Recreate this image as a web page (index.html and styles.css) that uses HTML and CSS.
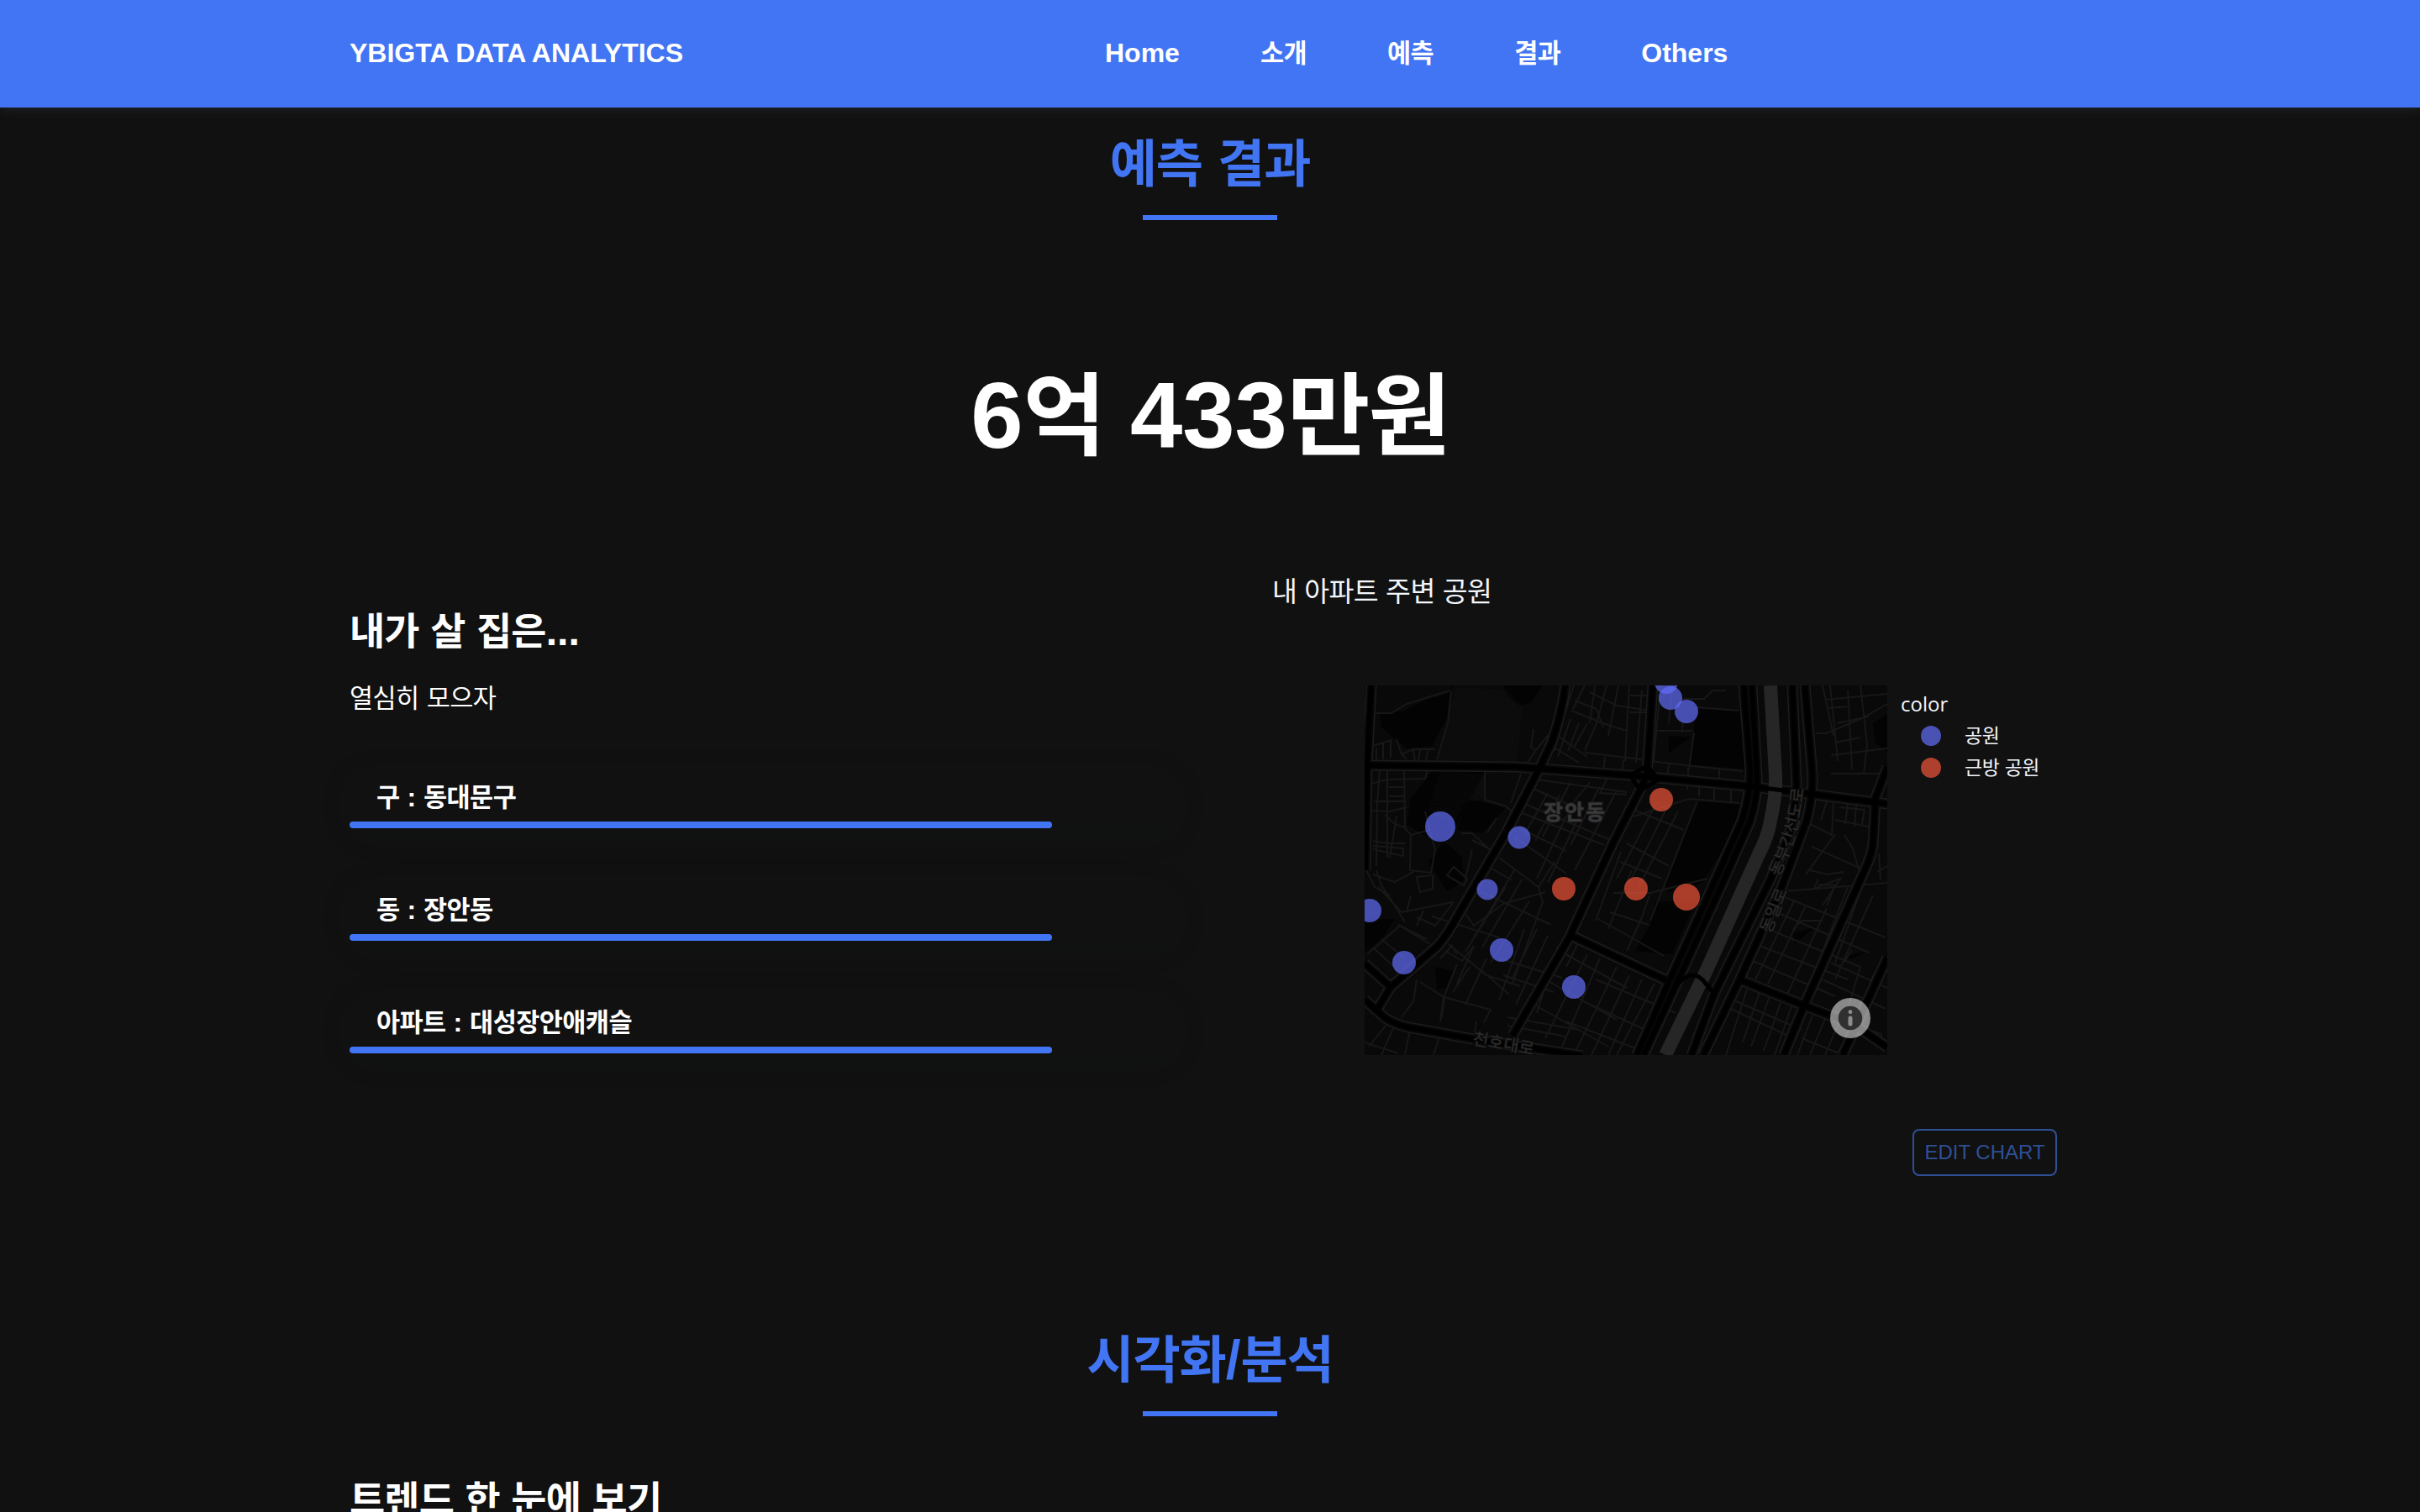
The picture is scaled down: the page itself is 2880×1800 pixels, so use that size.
FILE: index.html
```html
<!DOCTYPE html>
<html lang="ko">
<head>
<meta charset="utf-8">
<title>YBIGTA DATA ANALYTICS</title>
<link rel="stylesheet" href="styles.css">
</head>
<body>
<header class="nav">
  <div class="container nav-inner">
    <a class="brand">YBIGTA DATA ANALYTICS</a>
    <nav class="links"><a>Home</a><a class="ko">소개</a><a class="ko">예측</a><a class="ko">결과</a><a>Others</a></nav>
  </div>
</header>
<main>
<section class="section">
  <h2 class="section-title"><span class="ko">예측 결과</span></h2>
  <p class="price">6<span class="ko">억</span> 433<span class="ko">만원</span></p>
  <div class="container columns">
    <div class="home">
      <h3 class="sub-title"><span class="ko">내가 살 집은</span>...</h3>
      <p class="lead"><span class="ko">열심히 모으자</span></p>
      <ul class="cards">
        <li class="card"><h4><span class="ko">구</span> : <span class="ko">동대문구</span></h4><div class="bar"></div></li>
        <li class="card"><h4><span class="ko">동</span> : <span class="ko">장안동</span></h4><div class="bar"></div></li>
        <li class="card"><h4><span class="ko">아파트</span> : <span class="ko">대성장안애캐슬</span></h4><div class="bar"></div></li>
      </ul>
    </div>
    <div class="chart">
      <h5 class="chart-title"><span class="ko">내 아파트 주변 공원</span></h5>
      <div class="plot">
        <svg class="map" viewBox="0 0 622 440" width="622" height="440">
          <defs>
            <pattern id="dots" width="4" height="4" patternUnits="userSpaceOnUse"><circle cx="1" cy="1" r=".7" fill="#141414"/><circle cx="3" cy="3" r=".7" fill="#141414"/></pattern>
            <g id="roads" fill="none" stroke-linejoin="round">
              <path d="M8 0L3 94L1 220"/>
              <path d="M0 95L180 97L316 107L456 120L529 129L622 141"/>
              <path d="M239 0Q234 35 223 67L209 97L169 174L112 272Q98 298 86 311L31 359L16 384"/>
              <path d="M0 374L20 392Q30 402 52 407L129 421L259 441"/>
              <path d="M0 331L31 359"/>
              <path d="M343 0L336 107L328 124L296 187L243 301L176 417"/>
              <path d="M244 297L316 331L359 351"/>
              <path d="M451 0L459 101Q459 132 449 161L406 257L363 351L324 440"/>
              <path d="M461 0L467 107Q468 130 459 161L419 251L373 351L332 440"/>
              <path d="M509 0L514 117Q512 165 500 190L483 231L416 367L389 440"/>
              <path d="M524 0L533 107Q533 135 526 161L496 241L446 351L403 440"/>
              <path d="M622 97L608 134L605 190Q603 203 596 218L523 381L499 440"/>
              <path d="M448 351L523 381L583 404L622 431"/>
              <path d="M622 324L569 440"/>
            </g>
          </defs>
          <rect width="622" height="440" fill="#090909"/>
          <g fill="#030303">
            <path d="M32 0L105 0L99 10L70 18L46 31L18 32L20 50L50 75L80 72L98 38L102 0ZM165 0H212L198 20L184 24L170 12Z"/>
            <path d="M122 135L168 145L140 176L110 172ZM82 100L143 102L110 165L76 210L98 245L118 232L116 205L100 190L70 178L50 165L55 135Z"/>
            <path d="M0 278L36 278L22 300L0 318ZM395 28L450 30L458 100L388 94ZM396 138L446 142L440 172L402 235L362 246L358 238ZM605 45L622 34V80L608 68ZM346 258L395 255L366 320L322 316L340 285Z"/>
            <path d="M84 335L105 340L96 360L86 362ZM510 295L535 288L512 308ZM573 322L600 316L578 326ZM362 60L388 62L362 80Z"/>
          </g>
          <path d="M108 2L170 6L188 25L181 90L85 90L97 55Z" fill="url(#dots)"/>
          <path d="M90 103L143 106L142 136L120 138L106 163L75 150Z" fill="url(#dots)"/>
          <g class="streets">
            <path d="M13 33H32L50 22L102 6M103 8L99 45L86 88M32 65L10 72M14 74V92M22 68V88M31 66V86M38 64L44 82L58 76H84M44 82L50 88M58 76L60 90M66 77L64 90M75 78L73 90M201 52L198 74L204 77L222 55M204 77L194 92"/>
            <path d="M18 100L15 140L14 215M27 100V205M47 102L48 170M8 117L27 112L72 111L75 100M29 121H46M29 132H46M12 138H50M8 149L30 150L50 145M24 154L36 165L50 170M10 185L27 188H48M10 195L46 203V194L10 191M30 205L38 155M48 170L55 178L78 172M55 178L54 220L79 223L82 206L84 195L78 175M62 228L81 226V242L66 246ZM98 226L106 216L122 230L118 238ZM78 173L72 150"/>
            <path d="M10 225L30 232L36 234L58 222M14 220L20 238L36 262L48 282M2 220L12 240L30 250M16 240L44 270L105 258M55 250L50 270M70 268L62 286M62 276L84 286L106 258M40 285L78 308M3 320L42 286L74 302M20 302L48 325M10 312L35 335M90 325L104 310L110 320M96 316L116 328L130 310"/>
            <path d="M143 102V136L168 144L182 155M186 105L174 140M115 176H128L156 202M128 195L120 230M157 158L146 175M170 170L158 192M128 184L155 198M160 205L207 240L226 210M148 216L175 232M138 245L222 285M168 240L120 317M178 220L130 300M188 230L140 312M196 257L150 330M207 240L212 258L176 355M120 272L130 286L165 260L215 246"/>
            <path d="M188 140L300 187M190 118L250 145M205 112L312 127M184 170L240 197M188 152L285 190M178 180L240 224M240 155L205 230M253 160L218 235M218 128L190 178M232 130L203 185M245 115L212 180M268 115L240 150M280 120L245 190M300 125L250 220M290 108L280 128L312 130"/>
            <path d="M249 0L237 38M262 0L248 28M250 18L276 28M246 30L284 45L312 54M268 8L300 24L340 30M274 0L268 45M288 0L276 45L262 78M302 0L290 60M315 0L310 90M330 5L323 92M235 35L226 78M245 40L230 85M255 45L242 78M230 60L265 85M226 74L255 92M265 45L250 72M276 28L284 50M262 80L330 88M286 85L284 105M308 88L306 106M340 54H390M352 0L344 90M366 0L362 45M379 40L378 56M392 56L386 100M340 90L390 96L450 102M362 94L360 108M385 98V111M422 100V112M376 16H404L414 6H430M395 26L446 30M316 12H340M316 32H335"/>
            <path d="M310 144L380 172M320 156L386 135L446 140M312 188L362 215M304 210L354 230M348 138L300 230M360 145L315 235M373 150L326 240M396 138L340 280M385 110L384 124M398 120V132M416 118V138M436 122V138M296 247L340 247L408 230M292 270L338 285M340 247L330 276L312 316M278 278L356 322M290 195L265 265L245 292M305 198L275 280M318 220L290 290"/>
            <path d="M205 290L175 350M218 298L180 380M190 290L160 375M230 310L205 390M165 345L225 365M160 325L235 348M140 340L172 368M125 335L105 365M100 308L145 345L185 358M110 332L95 370L92 395M94 371L150 386L142 402M66 353L94 371M62 350L58 376L44 395M90 400L94 371M130 310L110 355M145 325L120 380M160 300L80 275M230 315L312 360M215 350L300 398M202 380L290 430M265 320L215 420M280 325L235 430M300 335L250 438M315 345L270 440M330 350L290 440M345 355L300 440M255 305L240 335M275 350L370 390M258 375L345 415M240 400L330 435"/>
            <path d="M5 430L25 405M20 440L34 408M0 425L40 438M54 410L48 440M90 415L82 440M133 400L130 420M170 405L240 418M170 395L255 410"/>
            <path d="M545 0L558 60M554 0L563 90M537 57H550L590 40L622 22M548 17L622 10M550 27L578 25M562 45L600 37M560 68L590 62M555 83L622 75M555 105H622M590 0L598 70L594 105M575 5L580 100M540 135L550 138L543 160M558 140L556 178L530 165M565 145L595 148L592 165M560 160L600 168M575 140L572 165M585 142L583 168M571 178L580 192L590 225M532 192L600 222M530 220L550 225L570 222M610 222L622 215M612 200L614 232M560 177L525 225"/>
            <path d="M500 245L622 235M495 250L620 300M486 268L600 318M480 290L590 335M470 310L575 350M462 328L560 370M512 255L465 350M525 262L480 355M540 230L535 242L566 230L545 262M550 265L502 370M575 240L530 355M590 245L560 330M605 250L560 350M540 237L560 238L550 262M510 290L520 280L545 280M580 315L570 330"/>
            <path d="M440 375L520 410M436 385L510 420M455 362L430 440M470 365L450 425M482 370L460 430M495 378L475 435M508 382L488 440M536 385L515 440M550 392L530 440M565 400L548 440M545 350L620 385M555 330L622 360M590 335L575 385M605 345L590 390M520 420L565 438M600 410L615 415V424"/>
          </g>
          <use href="#roads" class="road-edge"/>
          <use href="#roads" class="road-gap"/>
          <use href="#roads" class="road-core"/>
          <path class="river" d="M483 0L489 107Q490 130 483 161Q480 180 469 201L406 341L358 440"/>
          <path class="bridge" d="M420 115L467 121L529 129M373 355Q392 335 406 355L416 367M336 96L316 107L328 125L350 112Z"/>
          <g class="place-names">
            <text class="district" x="213" y="160">장안동</text>
            <path id="way-s" d="M128 427L206 441" fill="none"/>
            <path id="way-e" d="M493 228Q523 166 523 106" fill="none"/>
            <path id="way-w" d="M483 296L505 240" fill="none"/>
            <text class="way"><textPath href="#way-s">천호대로</textPath></text>
            <text class="way"><textPath href="#way-e">동부간선도로</textPath></text>
            <text class="way"><textPath href="#way-w">동일로</textPath></text>
          </g>
          <g class="park">
            <circle cx="359" cy="-4" r="14"/><circle cx="364" cy="15" r="14"/><circle cx="383" cy="31" r="14"/>
            <circle cx="90" cy="168" r="18"/><circle cx="184" cy="181" r="13.5"/><circle cx="146" cy="243" r="12.5"/>
            <circle cx="6" cy="268" r="14"/><circle cx="47" cy="330" r="14"/><circle cx="163" cy="315" r="14"/><circle cx="249" cy="359" r="14"/>
          </g>
          <g class="near">
            <circle cx="353" cy="136" r="14"/><circle cx="237" cy="242" r="14"/><circle cx="323" cy="242" r="14"/><circle cx="383" cy="252" r="16"/>
          </g>
          <circle cx="578" cy="396" r="24" fill="#fff" opacity=".52"/>
          <circle cx="578" cy="396" r="14.3" fill="#303030"/>
          <circle cx="578" cy="388.7" r="2.4" fill="#8d8d8d"/>
          <rect x="575.5" y="393.5" width="5" height="12" rx="2.5" fill="#8d8d8d"/>
        </svg>
        <div class="legend">
          <div class="legend-title">color</div>
          <div class="legend-item"><i class="dot dot-park"></i><span class="ko">공원</span></div>
          <div class="legend-item"><i class="dot dot-near"></i><span class="ko">근방 공원</span></div>
        </div>
      </div>
      <a class="edit">EDIT CHART</a>
    </div>
  </div>
</section>
<section class="section section-last">
  <h2 class="section-title"><span class="ko">시각화</span>/<span class="ko">분석</span></h2>
  <div class="container"><h3 class="sub-title trend"><span class="ko">트렌드 한 눈에 보기</span></h3></div>
</section>
</main>
</body>
</html>
```
FILE: styles.css
```css
* { box-sizing: border-box; margin: 0; padding: 0; }
html, body { height: 1800px; overflow: hidden; }
body {
  background: #111;
  color: #fff;
  font: 32px/48px "Liberation Sans", "Noto Sans CJK KR", sans-serif;
}
.ko { font-size: .955em; letter-spacing: -0.018em; word-spacing: 0.035em; }
h2 .ko, h3 .ko, h4 .ko, h5 .ko, p .ko { line-height: 0; }
.container { width: 2048px; margin: 0 auto; }

.nav {
  position: relative;
  height: 128px;
  background: #4275f3;
  box-shadow: 0 2px 12px rgba(57, 63, 72, .4);
  font-weight: bold;
}
.nav-inner { display: grid; grid-template-columns: 899px 1fr; align-items: center; height: 126px; }
.links { display: flex; gap: 96px; }

.section { height: 1424px; padding-top: 19px; }
.section-last { height: 248px; }
.section-title {
  font-size: 64px;
  line-height: 96px;
  color: #4275f3;
  text-align: center;
}
.section-title::after {
  content: "";
  display: block;
  width: 160px;
  height: 6px;
  margin: 13px auto 0;
  background: #4275f3;
}
.price { margin-top: 149px; font-size: 112px; font-weight: bold; line-height: 168px; text-align: center; }

.columns { display: grid; grid-template-columns: 984px 984px; column-gap: 80px; margin-top: 71px; }
.home { padding-top: 66px; }
.sub-title { font-size: 48px; line-height: 72px; }
.lead { margin-top: 19px; }
.cards { list-style: none; display: grid; gap: 64px; margin-top: 61px; }
.card {
  display: flex;
  flex-direction: column;
  justify-content: space-between;
  height: 70px;
  padding-top: 9px;
  border-radius: 16px;
  box-shadow: 0 8px 44px rgba(20, 60, 48, .07);
}
.card h4 { padding-left: 32px; font-size: 32px; line-height: 48px; }
.bar { width: 85%; height: 8px; border-radius: 4px; background: #4275f3; }

.chart { display: flex; flex-direction: column; color: #f2f5fa; font-family: "Open Sans", "Noto Sans CJK KR", sans-serif; }
.chart-title { padding-left: 34px; margin-top: 29px; font-size: 34px; font-weight: normal; line-height: 48px; }
.plot { display: flex; gap: 16px; margin: 89px 0 0 144px; }
.map { display: block; background: #090909; }
.legend { padding-top: 3px; font-size: 24px; line-height: 38px; }
.legend-item { display: flex; align-items: center; padding-left: 24px; }
.dot { width: 24px; height: 24px; margin-right: 28px; border-radius: 50%; opacity: .7; }
.dot-park { background: #636efa; }
.dot-near { background: #ef553b; }
.edit {
  align-self: flex-end;
  width: 172px;
  height: 56px;
  margin: 88px 16px 0 0;
  border: 2px solid #2f4f95;
  border-radius: 8px;
  color: #2f4f95;
  font: 24px/52px "Liberation Sans", sans-serif;
  text-align: center;
}
.trend { margin-top: 64px; }

.streets { fill: none; stroke: #171717; stroke-width: 2; }
.road-edge { stroke: #1c1c1c; stroke-width: 13; }
.road-gap { stroke: #080808; stroke-width: 10; }
.road-core { stroke: #000; stroke-width: 6; }
.river { fill: none; stroke: #262626; stroke-width: 16; }
.bridge { fill: none; stroke: #000; stroke-width: 5; }
.place-names { fill: #393939; font-family: "Noto Sans CJK KR", sans-serif; stroke: #0c0c0c; stroke-width: 2px; paint-order: stroke; }
.district { font-size: 25px; font-weight: bold; letter-spacing: 2px; stroke: #1a1a1a; }
.way { font-size: 20px; fill: #2d2d2d; }
.park { fill: #636efa; fill-opacity: .7; }
.near { fill: #ef553b; fill-opacity: .7; }
```
